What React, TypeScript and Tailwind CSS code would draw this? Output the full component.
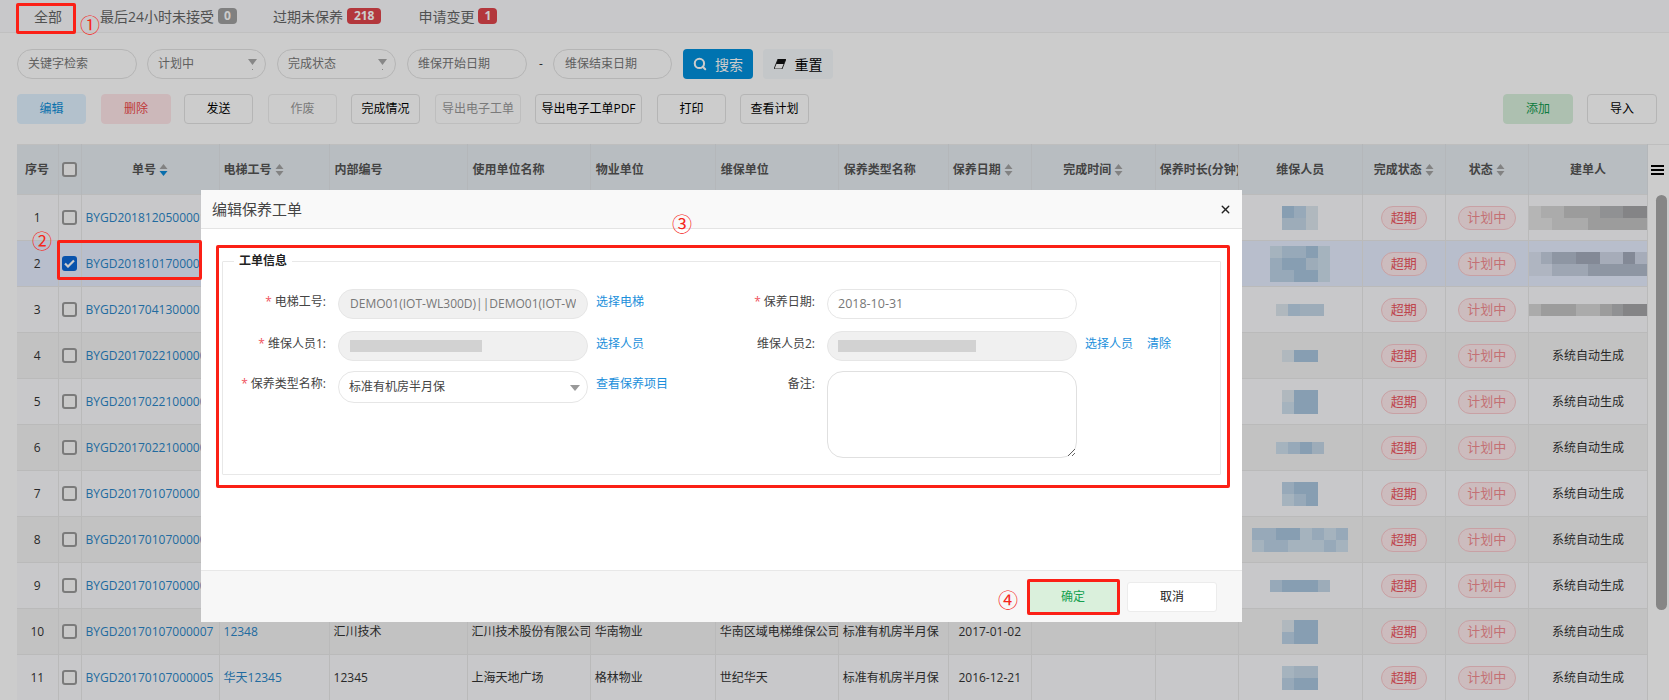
import { Search, X } from "lucide-react";

const blue = ["#cfe0ee", "#bdd4e8", "#a9c6df", "#c5d8e8", "#dde6ee"];
const gray = ["#e3e3e3", "#d6d6d6", "#c4c4c4", "#b4b6b8", "#a6a6a8"];
const tint = ["#dbe3f2", "#c6d0e0", "#b2bccc", "#a4acbc", "#d0d8e8"];

// mosaic cells are palette indexes, one string per line
const maintainers: string[][] = [
  ["214", "334"],
  ["01120", "12230", "11220"],
  ["4133"],
  ["422"],
  ["422", "022"],
  ["0123"],
  ["122", "012"],
  ["11220101", "01100010"],
  ["12223"],
  ["422", "122"],
  ["033", "122"],
];

const creators: Record<number, string[]> = {
  0: ["0112223344", "0011122222"],
  1: ["0122334434", "0011122222"],
  2: ["1222112344"],
};

const rows = [
  { code: "BYGD20181205000012" },
  { code: "BYGD20181017000011", selected: true },
  { code: "BYGD20170413000010" },
  { code: "BYGD20170221000009" },
  { code: "BYGD20170221000008" },
  { code: "BYGD20170221000007" },
  { code: "BYGD20170107000010" },
  { code: "BYGD20170107000009" },
  { code: "BYGD20170107000008" },
  {
    code: "BYGD20170107000007",
    lift: "12348",
    inner: "汇川技术",
    user: "汇川技术股份有限公司",
    property: "华南物业",
    company: "华南区域电梯维保公司",
    kind: "标准有机房半月保",
    date: "2017-01-02",
  },
  {
    code: "BYGD20170107000005",
    lift: "华天12345",
    inner: "12345",
    user: "上海天地广场",
    property: "格林物业",
    company: "世纪华天",
    kind: "标准有机房半月保",
    date: "2016-12-21",
  },
];

const Sort = ({ active }: { active?: boolean }) => (
  <svg width="9" height="14" viewBox="0 0 9 14" className="ml-[3px] inline-block align-[-3px]">
    <path d="M4.5 1 8.5 6H.5z" fill="#a3a3a3" />
    <path d="M4.5 13 8.5 8H.5z" fill={active ? "#0a8ad8" : "#a3a3a3"} />
  </svg>
);

const Arrow = () => (
  <svg width="9" height="12" viewBox="0 0 9 12" className="absolute right-[8px] top-[9px]">
    <path d="M0 0h9L4.500 6z" fill="#a9a9a9" />
    <rect x="4" y="10" width="1" height="1" fill="#a9a9a9" />
  </svg>
);

const Mosaic = ({ lines, palette }: { lines: string[]; palette: string[] }) => (
  <div className="flex flex-col">
    {lines.map((line, i) => (
      <div key={i} className="flex justify-center">
        {line.split("").map((c, j) => (
          <div key={j} className="h-[12px] w-[12px]" style={{ background: palette[Number(c)] }} />
        ))}
      </div>
    ))}
  </div>
);

const Box = ({ checked }: { checked?: boolean }) =>
  checked ? (
    <span className="inline-flex h-[15px] w-[15px] items-center justify-center rounded-[3px] bg-[#0c68d8]">
      <svg width="11" height="9" viewBox="0 0 11 9">
        <path d="M1 4.500 4 7.500 10 1.500" fill="none" stroke="#fff" strokeWidth="2.200" />
      </svg>
    </span>
  ) : (
    <span className="inline-block h-[15px] w-[15px] rounded-[3px] border-2 border-[#9a9a9a] bg-[#fafafa]" />
  );

const Pill = ({ w, text, pale }: { w: string; text: string; pale?: boolean }) => (
  <span
    className={`inline-flex h-[24px] items-center justify-center rounded-full border border-[#fbc9cd] bg-[#ffecee] text-[13px] ${w} ${
      pale ? "text-[#f58c92]" : "text-[#ee5560]"
    }`}
  >
    {text}
  </span>
);

const ActionButton = ({ w, text, className }: { w: string; text: string; className?: string }) => (
  <button className={`h-[30px] rounded-[4px] border text-[12px] ${w} ${className ?? "border-[#e3e3e3] bg-white text-black"}`}>
    {text}
  </button>
);

const Field = ({ label, required, w, children }: { label: string; required?: boolean; w: string; children: React.ReactNode }) => (
  <div className="flex items-start">
    <label className={`h-[26px] shrink-0 pr-[12px] text-right text-[12px] leading-[26px] text-[#444] ${w}`}>
      {required && <span className="mr-[3px] text-[#f0525e]">*</span>}
      {label}:
    </label>
    {children}
  </div>
);

const Circled = ({ text, className }: { text: string; className: string }) => (
  <div className={`absolute text-[20px] leading-none text-[#f5261b] ${className}`}>{text}</div>
);

const Hole = ({ className }: { className: string }) => (
  <div className={`absolute rounded-[2px] border-[3px] border-[#fb2016] ${className}`} />
);

const th = "whitespace-nowrap border-r border-[#e2e5e9] px-[5px] text-left font-bold text-[#555]";
const td = "overflow-hidden whitespace-nowrap border-r border-[#e9e9e9] px-[4px]";

export default function App() {
  return (
    <div className="relative h-[700px] w-[1669px] overflow-hidden bg-white font-['Open_Sans','Noto_Sans_CJK_SC',sans-serif] text-[12px] text-[#333]">
      {/* Tabs */}
      <div className="flex h-[33px] items-center border-b border-[#f0f0f0] bg-[#fafbfd] pl-[34px] text-[14px] text-[#666]">
        <span>全部</span>
        <span className="ml-[38px]">最后24小时未接受</span>
        <span className="ml-[4px] rounded-[4px] bg-[#a0a0a0] px-[6px] text-[12px] font-bold leading-[16px] text-white">0</span>
        <span className="ml-[36px]">过期未保养</span>
        <span className="ml-[4px] rounded-[4px] bg-[#e0454c] px-[7px] text-[12px] font-bold leading-[16px] text-white">218</span>
        <span className="ml-[37px]">申请变更</span>
        <span className="ml-[4px] rounded-[4px] bg-[#e0454c] px-[6px] text-[12px] font-bold leading-[16px] text-white">1</span>
      </div>

      {/* Filters */}
      <div className="ml-[17px] mt-[16px] flex h-[30px] items-center text-[12px] text-[#777]">
        <div className="flex h-full w-[120px] items-center rounded-full border border-[#e3e3e3] pl-[10px]">关键字检索</div>
        <div className="relative ml-[10px] flex h-full w-[119px] items-center rounded-full border border-[#e3e3e3] pl-[10px]">
          计划中
          <Arrow />
        </div>
        <div className="relative ml-[11px] flex h-full w-[119px] items-center rounded-full border border-[#e3e3e3] pl-[10px]">
          完成状态
          <Arrow />
        </div>
        <div className="ml-[11px] flex h-full w-[120px] items-center rounded-full border border-[#e3e3e3] pl-[10px]">维保开始日期</div>
        <span className="ml-[12px] w-[14px] text-[#333]">-</span>
        <div className="flex h-full w-[119px] items-center rounded-full border border-[#e3e3e3] pl-[11px]">维保结束日期</div>
        <button className="ml-[11px] flex h-full w-[70px] items-center justify-center gap-[8px] rounded-[4px] bg-[#0090dc] text-[14px] text-white">
          <Search size={14} strokeWidth={3.5} />
          搜索
        </button>
        <button className="ml-[10px] flex h-full w-[70px] items-center justify-center gap-[9px] rounded-[4px] bg-[#f5f9fc] text-[14px] text-black">
          <svg width="12" height="10" viewBox="0 0 12 10">
            <path d="M4 0h8L8 10H0z" fill="#111" />
            <path d="M2 5h8L8 10H0z" fill="#fff" />
            <path d="M4 0h8L8 10H0z" fill="none" stroke="#111" strokeWidth=".8" />
          </svg>
          重置
        </button>
      </div>

      {/* Actions */}
      <div className="ml-[17px] mt-[15px] flex h-[30px] w-[1640px] items-center">
        <ActionButton w="w-[69px]" text="编辑" className="border-[#e0f2ff] bg-[#e0f2ff] text-[#0c8ed9]" />
        <ActionButton w="ml-[15px] w-[70px]" text="删除" className="border-[#ffe6e9] bg-[#ffe6e9] text-[#f04a4a]" />
        <ActionButton w="ml-[13px] w-[69px]" text="发送" />
        <ActionButton w="ml-[15px] w-[69px]" text="作废" className="border-[#eeeeee] bg-white text-[#999]" />
        <ActionButton w="ml-[14px] w-[69px]" text="完成情况" />
        <ActionButton w="ml-[15px] w-[86px]" text="导出电子工单" className="border-[#eeeeee] bg-white text-[#999]" />
        <ActionButton w="ml-[14px] w-[107px]" text="导出电子工单PDF" />
        <ActionButton w="ml-[15px] w-[69px]" text="打印" />
        <ActionButton w="ml-[14px] w-[69px]" text="查看计划" />
        <div className="flex-1" />
        <ActionButton w="w-[70px]" text="添加" className="border-[#d9f1dc] bg-[#d9f1dc] text-[#0f9a4e]" />
        <ActionButton w="ml-[14px] w-[70px]" text="导入" />
      </div>

      {/* Table */}
      <div className="ml-[17px] mt-[20px] flex">
        <table className="w-[1631px] table-fixed border-collapse border-t border-[#eeeeee]">
          <colgroup>
            <col className="w-[41px]" />
            <col className="w-[23px]" />
            <col className="w-[138px]" />
            <col className="w-[110px]" />
            <col className="w-[138px]" />
            <col className="w-[123px]" />
            <col className="w-[125px]" />
            <col className="w-[123px]" />
            <col className="w-[110px]" />
            <col className="w-[83px]" />
            <col className="w-[124px]" />
            <col className="w-[83px]" />
            <col className="w-[124px]" />
            <col className="w-[83px]" />
            <col className="w-[83px]" />
            <col className="w-[119px]" />
          </colgroup>
          <thead>
            <tr className="h-[50px] border-b border-[#eaeaea] bg-[#e7edf2]">
              <th className={`${th} !px-[8px]`}>序号</th>
              <th className="border-r border-[#e2e5e9]">
                <div className="flex justify-center">
                  <Box />
                </div>
              </th>
              <th className={`${th} !text-center`}>
                单号
                <Sort active />
              </th>
              <th className={`${th} !px-[4px]`}>
                电梯工号
                <Sort />
              </th>
              <th className={th}>内部编号</th>
              <th className={th}>使用单位名称</th>
              <th className={th}>物业单位</th>
              <th className={th}>维保单位</th>
              <th className={th}>保养类型名称</th>
              <th className={`${th} !px-[4px] text-center`}>
                保养日期
                <Sort />
              </th>
              <th className={`${th} !text-center`}>
                完成时间
                <Sort />
              </th>
              <th className={`${th} overflow-hidden !px-[4px]`}>保养时长(分钟)</th>
              <th className={`${th} !text-center`}>维保人员</th>
              <th className={`${th} !px-[4px] !text-center`}>
                完成状态
                <Sort />
              </th>
              <th className={`${th} !px-[4px] !text-center`}>
                状态
                <Sort />
              </th>
              <th className={`${th} !text-center`}>建单人</th>
            </tr>
          </thead>
          <tbody>
            {rows.map((row, i) => (
              <tr
                key={i}
                className={`h-[46px] border-b border-[#e9e9e9] ${
                  row.selected ? "bg-[#e6eeff]" : i % 2 === 1 ? "bg-[#f3f3f3]" : "bg-[#fafbfd]"
                }`}
              >
                <td className={`${td} text-center`}>{i + 1}</td>
                <td className="border-r border-[#e9e9e9]">
                  <div className="flex justify-center">
                    <Box checked={row.selected} />
                  </div>
                </td>
                <td className={`${td} text-[#2a86c8]`}>{row.code}</td>
                <td className={`${td} text-[#2a86c8]`}>{row.lift}</td>
                <td className={td}>{row.inner}</td>
                <td className={td}>{row.user}</td>
                <td className={td}>{row.property}</td>
                <td className={td}>{row.company}</td>
                <td className={td}>{row.kind}</td>
                <td className={`${td} text-center`}>{row.date}</td>
                <td className={td} />
                <td className={td} />
                <td className={`${td} !px-0`}>
                  <Mosaic lines={maintainers[i]} palette={blue} />
                </td>
                <td className={`${td} text-center`}>
                  <Pill w="w-[46px]" text="超期" />
                </td>
                <td className={`${td} !px-0 text-center`}>
                  <Pill w="w-[58px]" text="计划中" pale />
                </td>
                <td className={`${td} !px-0 text-center`}>
                  {creators[i] ? <Mosaic lines={creators[i]} palette={i === 1 ? tint : gray} /> : "系统自动生成"}
                </td>
              </tr>
            ))}
          </tbody>
        </table>
        <div className="flex w-[21px] shrink-0 flex-col">
          <div className="flex h-[51px] items-center justify-center border-t border-[#eeeeee] pr-[3px]">
            <svg width="13" height="10" viewBox="0 0 13 10">
              <path d="M0 1h13M0 5h13M0 9h13" stroke="#000" strokeWidth="2" />
            </svg>
          </div>
          <div className="ml-[8px] h-[415px] w-[11px] rounded-full bg-[#a8a8a8]" />
        </div>
      </div>

      {/* Backdrop */}
      <div className="absolute inset-0 bg-black/20" />

      {/* Dialog */}
      <div className="absolute left-[201px] top-[190px] flex h-[432px] w-[1041px] flex-col bg-white text-[12px]">
        <div className="flex h-[39px] shrink-0 items-center justify-between border-b border-[#e4e4e4] bg-[#f9f9f9] pl-[11px] pr-[10px]">
          <span className="text-[15px] text-[#444]">编辑保养工单</span>
          <X size={13} strokeWidth={2.500} className="text-[#222]" />
        </div>
        <div className="flex-1 px-[21px] pt-[24px]">
          <fieldset className="h-[222px] rounded-[1px] border border-[#e8e8e8] pl-0 pt-[20px]">
            <legend className="ml-[11px] px-[5px] text-[12px] font-bold leading-[16px] text-[#222]">工单信息</legend>
            <div className="flex">
              <div className="flex w-[489px] shrink-0 flex-col">
                <Field label="电梯工号" required w="w-[115px]">
                  <div className="h-[30px] w-[250px] overflow-hidden whitespace-nowrap rounded-full border border-[#e6e6e6] bg-[#f0f0f0] px-[11px] leading-[28px] text-[#777]">
                    <div className="overflow-hidden">DEMO01(IOT-WL300D)||DEMO01(IOT-W</div>
                  </div>
                  <a className="ml-[8px] leading-[26px] text-[#1b8fdb]">选择电梯</a>
                </Field>
                <div className="mt-[12px]">
                  <Field label="维保人员1" required w="w-[115px]">
                    <div className="flex h-[30px] w-[250px] items-center rounded-full border border-[#e6e6e6] bg-[#f0f0f0] pl-[11px]">
                      <div className="h-[12px] w-[132px] bg-[#d2d2d2]" />
                    </div>
                    <a className="ml-[8px] leading-[26px] text-[#1b8fdb]">选择人员</a>
                  </Field>
                </div>
                <div className="mt-[10px]">
                  <Field label="保养类型名称" required w="w-[115px]">
                    <div className="relative flex h-[32px] w-[250px] items-center rounded-full border border-[#e6e6e6] pl-[10px] text-[#444]">
                      标准有机房半月保
                      <svg width="10" height="6" viewBox="0 0 10 6" className="absolute right-[7px] top-[13px]">
                        <path d="M0 0h10L5 6z" fill="#999" />
                      </svg>
                    </div>
                    <a className="ml-[8px] leading-[26px] text-[#1b8fdb]">查看保养项目</a>
                  </Field>
                </div>
              </div>
              <div className="flex flex-col">
                <Field label="保养日期" required w="w-[115px]">
                  <div className="flex h-[30px] w-[250px] items-center rounded-full border border-[#e6e6e6] pl-[10px] text-[12.500px] text-[#777]">
                    2018-10-31
                  </div>
                </Field>
                <div className="mt-[12px]">
                  <Field label="维保人员2" w="w-[115px]">
                    <div className="flex h-[30px] w-[250px] items-center rounded-full border border-[#e6e6e6] bg-[#f0f0f0] pl-[10px]">
                      <div className="h-[12px] w-[138px] bg-[#d2d2d2]" />
                    </div>
                    <a className="ml-[8px] leading-[26px] text-[#1b8fdb]">选择人员</a>
                    <a className="ml-[14px] leading-[26px] text-[#1b8fdb]">清除</a>
                  </Field>
                </div>
                <div className="mt-[10px]">
                  <Field label="备注" w="w-[115px]">
                    <textarea readOnly className="h-[87px] w-[250px] rounded-[16px] border border-[#e0e0e0] outline-none" />
                  </Field>
                </div>
              </div>
            </div>
          </fieldset>
        </div>
        <div className="flex h-[52px] shrink-0 items-center justify-end border-t border-[#e8e8e8] bg-[#f7f7f7] pr-[25px]">
          <button className="h-[30px] w-[90px] rounded-[3px] bg-[#daf0dc] text-[12px] text-[#16a050]">确定</button>
          <button className="ml-[9px] h-[30px] w-[90px] rounded-[3px] border border-[#ececec] bg-white text-[12px] text-[#222]">取消</button>
        </div>
      </div>

      {/* Red annotations over the screenshot */}
      <Hole className="left-[16px] top-[3px] h-[31px] w-[60px]" />
      <Circled text="①" className="left-[80px] top-[16px]" />
      <Hole className="left-[57px] top-[240px] h-[40px] w-[145px]" />
      <Circled text="②" className="left-[32px] top-[232px]" />
      <Circled text="③" className="left-[672px] top-[215px]" />
      <Hole className="left-[216px] top-[245px] h-[243px] w-[1014px]" />
      <Circled text="④" className="left-[998px] top-[591px]" />
      <Hole className="left-[1027px] top-[579px] h-[36px] w-[93px]" />
    </div>
  );
}
